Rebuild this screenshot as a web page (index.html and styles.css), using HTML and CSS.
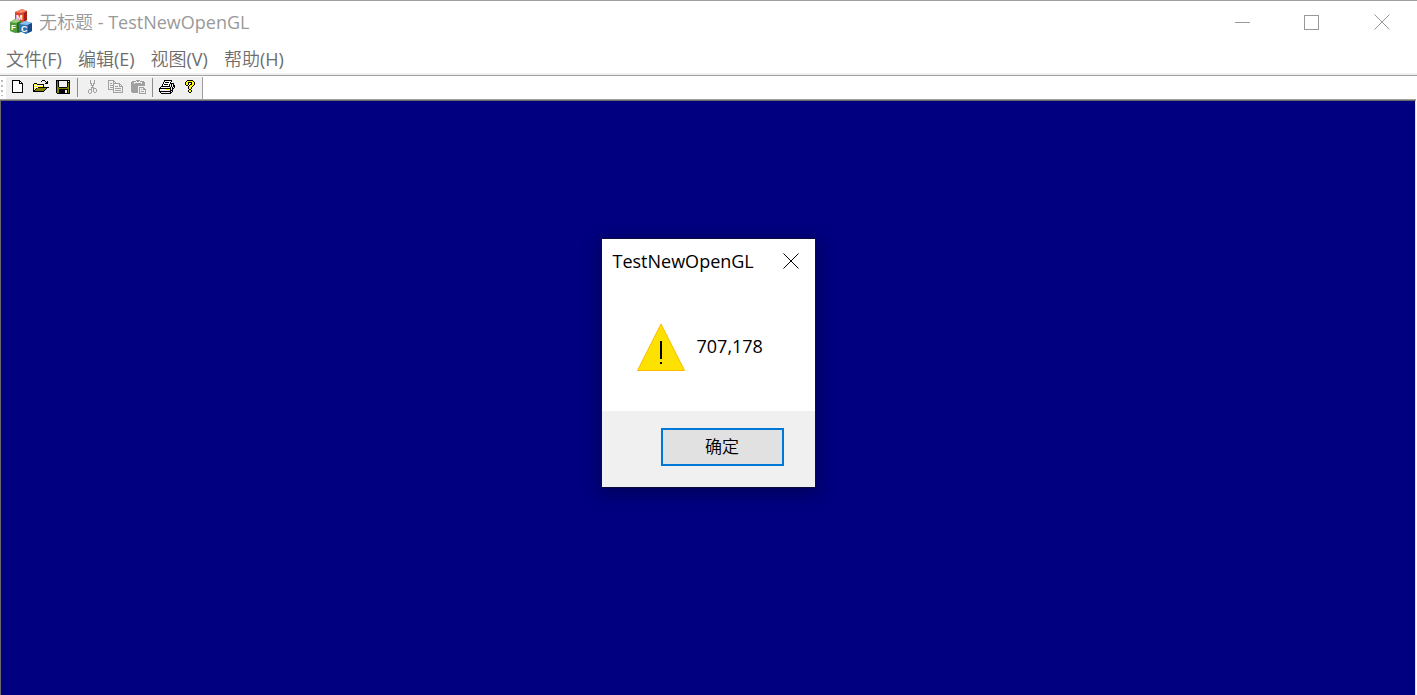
FILE: index.html
```html
<!DOCTYPE html>
<html lang="zh-CN">

<head>
    <meta charset="UTF-8">
    <meta name="viewport" content="width=device-width, initial-scale=1.0">
    <title>无标题 - TestNewOpenGL</title>
    <link rel="stylesheet" href="styles.css">
</head>

<body>

    <header class="titleBar">
        <svg class="appIcon" viewBox="0 0 24 26" aria-hidden="true">
            <path d="M6 3L13 0L18 2V11L12 14L6 11Z" fill="#d9452f" />
            <path d="M6 3L13 0L18 2L12 4Z" fill="#f58c6e" />
            <path d="M15 4L18 2V11L15 13Z" fill="#a51f16" />
            <path d="M1 13L6 10L12 12V23L6 24L1 22Z" fill="#4f9a3c" />
            <path d="M1 13L6 10L12 12L7 14Z" fill="#9bcf7c" />
            <path d="M8 14L12 12V23L8 24Z" fill="#2c6b24" />
            <path d="M10 15L16 12L23 14V22L17 25L10 22Z" fill="#2f73b8" />
            <path d="M10 15L16 12L23 14L18 16Z" fill="#8cc0ea" />
            <path d="M19 16L23 14V22L19 24Z" fill="#174a86" />
            <text x="7" y="11" font-size="8">M</text>
            <text x="2" y="21" font-size="8">F</text>
            <text x="12" y="23" font-size="9">C</text>
        </svg>
        <h1>无标题 - TestNewOpenGL</h1>
        <div class="winBtns">
            <button type="button" aria-label="最小化">
                <svg viewBox="0 0 16 16"><path d="M1 8.5H16" /></svg>
            </button>
            <button type="button" aria-label="最大化">
                <svg viewBox="0 0 16 16"><path d="M.5 1.5H14.5V15.5H.5Z" /></svg>
            </button>
            <button type="button" aria-label="关闭">
                <svg viewBox="0 0 16 16"><path d="M.5 .5L15.5 15.5M15.5 .5L.5 15.5" class="smooth" /></svg>
            </button>
        </div>
    </header>

    <nav class="menuBar">
        <button type="button">文件(F)</button>
        <button type="button">编辑(E)</button>
        <button type="button">视图(V)</button>
        <button type="button">帮助(H)</button>
    </nav>

    <div class="toolBar">
        <span class="grip"></span>
        <div class="tools">
            <button type="button" aria-label="新建"><svg data-icon="new"></svg></button>
            <button type="button" aria-label="打开"><svg data-icon="open"></svg></button>
            <button type="button" aria-label="保存"><svg data-icon="save"></svg></button>
            <span class="sep"></span>
            <button type="button" aria-label="剪切" disabled><svg data-icon="cut"></svg></button>
            <button type="button" aria-label="复制" disabled><svg data-icon="copy"></svg></button>
            <button type="button" aria-label="粘贴" disabled><svg data-icon="paste"></svg></button>
            <span class="sep"></span>
            <button type="button" aria-label="打印"><svg data-icon="print"></svg></button>
            <button type="button" aria-label="关于"><svg data-icon="help"></svg></button>
        </div>
    </div>

    <main class="view">
        <dialog class="msgBox" open aria-labelledby="msgTitle">
            <div class="msgTitle">
                <h2 id="msgTitle">TestNewOpenGL</h2>
                <button type="button" aria-label="关闭">
                    <svg viewBox="0 0 16 16"><path d="M.5 .5L15.5 15.5M15.5 .5L.5 15.5" class="smooth" /></svg>
                </button>
            </div>
            <div class="msgBody">
                <svg class="warn" viewBox="0 0 48 48" aria-hidden="true">
                    <path d="M24 1L47.500 47.500H.5Z" fill="#fde100" stroke="#ffb900" />
                    <path d="M23 18h2v18h-2zM23 39h2v2h-2z" fill="#000" />
                </svg>
                <p>707,178</p>
            </div>
            <div class="msgFoot">
                <button type="button" class="ok">确定</button>
            </div>
        </dialog>
    </main>

    <script src="icons.js"></script>
</body>

</html>
```
FILE: styles.css
```css
* {
    box-sizing: border-box;
}

body {
    margin: 0;
    height: 100vh;
    display: flex;
    flex-direction: column;
    overflow: hidden;
    background-color: #fff;
    border-top: 1px solid #a0a0a0;
    font-family: "Open Sans", "Noto Sans CJK SC DemiLight", "Noto Sans CJK SC", sans-serif;
    font-size: 18px;
    line-height: 24px;
}

h1,
h2,
p {
    margin: 0;
    font-size: 18px;
    font-weight: 400;
}

button {
    padding: 0;
    border: none;
    background: none;
    color: inherit;
    font: inherit;
    display: flex;
    align-items: center;
    justify-content: center;
}

svg {
    display: block;
    flex: none;
}

/* 标题栏 */
.titleBar {
    display: flex;
    align-items: center;
    height: 42px;
    padding-left: 9px;
    color: #999;
}

.appIcon {
    width: 24px;
    height: 26px;
    margin-right: 6px;
}

.appIcon text {
    fill: #fff;
    font-family: "Liberation Sans", sans-serif;
    font-weight: 700;
}

.winBtns {
    display: flex;
    margin-left: auto;
}

.winBtns button {
    width: 70px;
    height: 42px;
}

.winBtns svg,
.msgTitle svg {
    width: 16px;
    height: 16px;
    fill: none;
    stroke: currentColor;
    shape-rendering: crispEdges;
}

.winBtns .smooth,
.msgTitle .smooth {
    shape-rendering: auto;
}

/* 菜单 */
.menuBar {
    display: flex;
    gap: 16px;
    height: 32px;
    padding: 5px 6px 3px;
    color: #6d6d6d;
    border-bottom: 2px solid #f0f0f0;
}

/* 工具栏 */
.toolBar {
    display: flex;
    height: 25px;
    padding-bottom: 1px;
    border-top: 1px solid #a0a0a0;
}

.grip {
    width: 6px;
    margin: 3px 0;
    background: radial-gradient(circle at 2px 2px, #bbb 1px, #fff 1px) 0 0 / 6px 5px;
}

.tools {
    display: flex;
    margin-top: 1px;
    background-color: #f0f0f0;
    border-right: 1px solid #a0a0a0;
}

.tools button {
    width: 23px;
    height: 22px;
    justify-content: flex-start;
    padding-left: 3px;
}

.tools svg {
    width: 17px;
    height: 16px;
    shape-rendering: crispEdges;
}

.sep {
    width: 6px;
    margin: 1px 0 2px;
    background: linear-gradient(#8c8c8c, #8c8c8c) 2px 0 / 1px 100% no-repeat;
}

/* 绘图区 */
.view {
    position: relative;
    flex: 1;
    margin-right: 1px;
    background-color: #000080;
    border-top: 1px solid #696969;
    border-left: 1px solid #696969;
    border-right: 1px solid #e3e3e3;
    box-shadow: 0 -1px #a0a0a0;
}

/* 消息框 */
.msgBox {
    position: absolute;
    top: 137px;
    left: 0;
    right: 0;
    width: 215px;
    margin: 0 auto;
    padding: 0;
    color: #000;
    background-color: #fff;
    border: 1px solid #0c0c38;
    box-shadow: 0 4px 16px 2px rgba(0, 0, 0, .3);
}

.msgTitle {
    display: flex;
    align-items: center;
    justify-content: space-between;
    height: 43px;
    padding: 0 16px 0 11px;
}

.msgBody {
    display: flex;
    align-items: center;
    gap: 12px;
    height: 129px;
    padding: 0 35px;
}

.msgBody p {
    padding-bottom: 2px;
}

.warn {
    width: 48px;
    height: 48px;
}

.msgFoot {
    display: flex;
    justify-content: flex-end;
    padding: 17px 31px 21px;
    background-color: #f0f0f0;
}

.ok {
    width: 123px;
    height: 38px;
    background-color: #e1e1e1;
    border: 2px solid #0078d7;
    font-size: 17px;
}
```
FILE: icons.js
```js
// 工具栏图标, 一个字符一个像素
const colors = {
    '#': '#000',
    'w': '#fff',
    'y': '#ffff00',
    'o': '#808000',
    'e': '#f0f0f0',
    'g': '#a0a0a0'
};

const icons = {
    new: [
        '...########',
        '...#wwwwww##',
        '...#wwwwww#w#',
        '...#wwwwww####',
        '...#wwwwwwwww#',
        '...#wwwwwwwww#',
        '...#wwwwwwwww#',
        '...#wwwwwwwww#',
        '...#wwwwwwwww#',
        '...#wwwwwwwww#',
        '...#wwwwwwwww#',
        '...#wwwwwwwww#',
        '...###########'
    ],
    open: [
        '..........###',
        '.........#...#.#',
        '..............##',
        '..###........###',
        '.#ywy#######',
        '.#wywywywyw#',
        '.#ywywywywy#',
        '.#wywy###########',
        '.#yw#ooooooooo#',
        '.#w#ooooooooo#',
        '.##ooooooooo#',
        '.###########'
    ],
    save: [
        '.##############',
        '.#o#eeeeeeee#e#',
        '.#o#eeeeeeee###',
        '.#o#eeeeeeee#o#',
        '.#o#eeeeeeee#o#',
        '.#o#eeeeeeee#o#',
        '.#o#eeeeeeee#o#',
        '.#oo########oo#',
        '.#oooooooooooo#',
        '.#oo#########o#',
        '.#oo######ee#o#',
        '.#oo######ee#o#',
        '.#oo######ee#o#',
        '..#############'
    ],
    cut: [
        '......g...g',
        '......g...g',
        '......g...g',
        '......gg.gg',
        '.......g.g',
        '.......ggg',
        '........g',
        '.......ggg',
        '.......g.ggg',
        '.....ggg.g..g',
        '....g..g.g..g',
        '....g..g.g..g',
        '....g..g..gg',
        '.....gg'
    ],
    copy: [
        '.gggggg',
        '.g....gg',
        '.g....g.g',
        '.g.gg.ggggggg',
        '.g....g.....gg',
        '.g.gggg.....g.g',
        '.g....g.ggg.gggg',
        '.g.gggg........g',
        '.g....g.gggggg.g',
        '.gggggg........g',
        '......g.gggggg.g',
        '......g........g',
        '......gggggggggg'
    ],
    paste: [
        '......gggg',
        '..gggg.gg.gggg',
        '.ggg........ggg',
        '.ggg.gggggg.ggg',
        '.gggggggggggggg',
        '.gggggggggggggg',
        '.ggggggg.......',
        '.ggggggg.ggggg',
        '.ggggggg.g...gg',
        '.ggggggg.g.g.ggg',
        '.ggggggg.g.....g',
        '.ggggggg.g.ggg.g',
        '..gggggg.g.....g',
        '.........ggggggg'
    ],
    print: [
        '.....########',
        '.....#wwwwww#',
        '....#w####w#',
        '....#wwwwww####',
        '...#w####w#e#e#',
        '...#wwwwww#e#e##',
        '..#########e#e##',
        '.#eeeeeeeee#e#e#',
        '############e##',
        '#eeeeeeyyye#e#',
        '#eeeeeeeeee###',
        '############e#',
        '.#eeeeeeeee##',
        '..##########'
    ],
    help: [
        '.....######',
        '....#yyyyyy#',
        '...#yy####yy#',
        '...#yy#..#yy#',
        '...#yy#.##yy#',
        '....##.#yyy#',
        '......#yyy#',
        '......#yy#',
        '......#yy#',
        '.......##',
        '......#yy#',
        '......#yy#',
        '.......##'
    ]
};

document.querySelectorAll('svg[data-icon]').forEach((svg) => {
    svg.setAttribute('viewBox', '0 0 17 16');
    icons[svg.dataset.icon].forEach((row, y) => {
        [...row].forEach((ch, x) => {
            if (!colors[ch]) return;
            const px = document.createElementNS('http://www.w3.org/2000/svg', 'rect');
            px.setAttribute('x', x);
            px.setAttribute('y', y);
            px.setAttribute('width', 1);
            px.setAttribute('height', 1);
            px.setAttribute('fill', colors[ch]);
            svg.appendChild(px);
        });
    });
});
```
